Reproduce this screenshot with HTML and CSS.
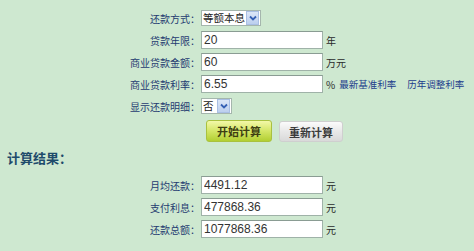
FILE: index.html
```
<!DOCTYPE html>
<html lang="zh-CN">
<head>
    <meta charset="UTF-8">
    <title>房贷计算器</title>
    <link rel="stylesheet" href="styles.css">
</head>
<body>
    <form class="calc">
        <div class="row">
            <label class="label">还款方式：</label>
            <div class="field">
                <span class="select select-wide">
                    <select><option>等额本息</option><option>等额本金</option></select>
                    <span class="arrow"><svg width="8" height="6" viewBox="0 0 8 6"><path d="M1 1.5 L4 4.5 L7 1.5" fill="none" stroke="#3560b4" stroke-width="1.8"/></svg></span>
                </span>
            </div>
        </div>
        <div class="row">
            <label class="label">贷款年限：</label>
            <div class="field"><input class="text" type="text" value="20"><span class="unit">年</span></div>
        </div>
        <div class="row">
            <label class="label">商业贷款金额：</label>
            <div class="field"><input class="text" type="text" value="60"><span class="unit">万元</span></div>
        </div>
        <div class="row">
            <label class="label">商业贷款利率：</label>
            <div class="field">
                <input class="text" type="text" value="6.55"><span class="unit">%</span>
                <a class="link" href="#">最新基准利率</a>
                <a class="link" href="#">历年调整利率</a>
            </div>
        </div>
        <div class="row">
            <label class="label">显示还款明细：</label>
            <div class="field">
                <span class="select select-narrow">
                    <select><option>否</option><option>是</option></select>
                    <span class="arrow"><svg width="8" height="6" viewBox="0 0 8 6"><path d="M1 1.5 L4 4.5 L7 1.5" fill="none" stroke="#3560b4" stroke-width="1.8"/></svg></span>
                </span>
            </div>
        </div>
        <div class="buttons">
            <button type="button" class="btn btn-go">开始计算</button>
            <button type="reset" class="btn btn-reset">重新计算</button>
        </div>
    </form>

    <h2 class="result-title">计算结果：</h2>

    <div class="calc results">
        <div class="row">
            <label class="label">月均还款：</label>
            <div class="field"><input class="text" type="text" value="4491.12"><span class="unit">元</span></div>
        </div>
        <div class="row">
            <label class="label">支付利息：</label>
            <div class="field"><input class="text" type="text" value="477868.36"><span class="unit">元</span></div>
        </div>
        <div class="row">
            <label class="label">还款总额：</label>
            <div class="field"><input class="text" type="text" value="1077868.36"><span class="unit">元</span></div>
        </div>
    </div>
</body>
</html>
```

FILE: styles.css
```
body {
    margin: 0;
    padding-top: 7px;
    background-color: #cee8d0;
    font-family: "Noto Sans CJK SC", "Liberation Sans", sans-serif;
    font-size: 10px;
    color: #1f3b70;
}
.calc {
    margin: 0;
}
.row {
    display: flex;
    align-items: center;
    height: 22px;
}
.label {
    width: 200px;
    text-align: right;
    white-space: nowrap;
}
.field {
    display: flex;
    align-items: center;
    margin-left: 1px;
}
.text {
    box-sizing: border-box;
    width: 122px;
    height: 18px;
    margin: 0;
    padding: 0 2px;
    border: 1px solid #9fb2a8;
    border-top-color: #8a9c93;
    background-color: white;
    font-family: "Liberation Sans", Arial, sans-serif;
    font-size: 12px;
    color: #333;
    outline: none;
}
.unit {
    margin-left: 3px;
    color: #2a2a2a;
}
.link {
    color: #1c3d8c;
    font-size: 9.5px;
    text-decoration: none;
    margin-left: 4px;
}
.link + .link {
    margin-left: 11px;
}
.select {
    display: inline-flex;
    align-items: center;
    box-sizing: border-box;
    height: 16px;
    border: 1px solid #a5b6ad;
    background-color: white;
}
.select select {
    appearance: none;
    -webkit-appearance: none;
    border: none;
    background: transparent;
    padding: 0 0 0 1px;
    margin: 0;
    height: 14px;
    font-family: "Noto Sans CJK SC", sans-serif;
    font-size: 10.5px;
    line-height: 14px;
    color: #222;
    outline: none;
}
.select-wide select {
    width: 44px;
}
.select-narrow select {
    width: 15px;
}
.arrow {
    display: flex;
    align-items: center;
    justify-content: center;
    width: 11px;
    height: 12px;
    margin-right: 1px;
    background: linear-gradient(#dbe6f7, #bccfee);
    border: 1px solid #a9bfe4;
}
.buttons {
    display: flex;
    align-items: flex-end;
    height: 25px;
    padding-left: 206px;
}
.btn {
    height: 22px;
    padding: 0;
    border-radius: 3px;
    font-family: "Noto Sans CJK SC", sans-serif;
    font-size: 11px;
    font-weight: bold;
    cursor: pointer;
}
.btn-go {
    width: 66px;
    background: linear-gradient(#f3f8a8, #d4e666 50%, #b2cf32);
    border: 1px solid #a9c13f;
    color: #3e3e12;
}
.btn-reset {
    width: 64px;
    height: 21px;
    margin-left: 7px;
    background: linear-gradient(#fbfbfb, #e8e8e8 50%, #d9d9d9);
    border: 1px solid #cfcfcf;
    color: #3a3a3a;
}
.result-title {
    margin: 7px 0 7px 7px;
    height: 18px;
    line-height: 18px;
    font-size: 13px;
    font-weight: bold;
    color: #1e4b6b;
}
```
